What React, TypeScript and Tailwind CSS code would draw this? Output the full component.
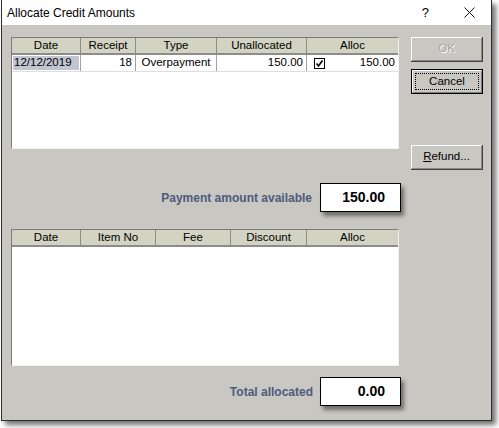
import React from "react";

const FONT = "font-['Liberation_Sans',Arial,sans-serif]";

type GridProps = {
  cols: string;
  headers: string[];
  height: string;
  children?: React.ReactNode;
};

function Grid({ cols, headers, height, children }: GridProps) {
  return (
    <div
      className={`w-[388px] ${height} border-l border-t border-[#7c7c7c] border-r border-b border-r-[#f2f2f2] border-b-[#f2f2f2] bg-white`}
    >
      <div className={`grid ${cols} h-[17px] border-b-2 border-[#8c8c8c] bg-[#d3d3c3]`}>
        {headers.map((h, i) => (
          <div
            key={h + i}
            className={`flex items-center justify-center text-[11.5px] leading-none text-black ${
              i < headers.length - 1 ? "border-r border-[#8c8c8c]" : ""
            }`}
          >
            {h}
          </div>
        ))}
      </div>
      {children}
    </div>
  );
}

function ValueBox({ value }: { value: string }) {
  return (
    <div className="flex h-[29px] w-[81px] items-center justify-end border border-black bg-white pr-[15px] text-[14px] font-bold text-black shadow-[3px_4px_4px_rgba(0,0,0,0.45)]">
      {value}
    </div>
  );
}

function Button({
  children,
  disabled,
  isDefault,
  className = "",
}: {
  children: React.ReactNode;
  disabled?: boolean;
  isDefault?: boolean;
  className?: string;
}) {
  if (isDefault) {
    return (
      <div className={`h-[25px] w-[72px] border border-black ${className}`}>
        <div className="h-full w-full border-t border-l border-white border-r border-b border-r-[#808080] border-b-[#808080] bg-[#c9c7c2] p-[2px]">
          <div className="flex h-full w-full items-center justify-center border border-dotted border-black text-[11.5px] text-black">
            {children}
          </div>
        </div>
      </div>
    );
  }
  return (
    <div
      className={`h-[25px] w-[72px] border-r border-b border-[#404040] ${className}`}
    >
      <div
        className={`flex h-full w-full items-center justify-center border-t border-l border-white border-r border-b border-r-[#8a8a8a] border-b-[#8a8a8a] bg-[#c9c7c2] text-[11.5px] ${
          disabled
            ? "text-[#a8a6a2] [text-shadow:1px_1px_0_#ffffff]"
            : "text-black"
        }`}
      >
        {children}
      </div>
    </div>
  );
}

export default function App() {
  return (
    <div className={`h-[428px] w-[499px] bg-white ${FONT}`}>
      <div className="ml-[1px] flex h-[421px] w-[491px] flex-col border-l border-r border-b border-[#2e2e2e] shadow-[4px_4px_5px_rgba(0,0,0,0.55)]">
        {/* title bar */}
        <div className="flex h-[25px] items-center bg-white pl-[5px] pr-[16px]">
          <span className="text-[12px] text-black">Allocate Credit Amounts</span>
          <span className="ml-auto text-[13px] text-black">?</span>
          <svg className="ml-[35px]" width="11" height="11" viewBox="0 0 11 11">
            <path d="M0.5 0.5 L10.5 10.5 M10.5 0.5 L0.5 10.5" stroke="#111" strokeWidth="1" />
          </svg>
        </div>

        {/* client */}
        <div className="flex flex-1 bg-[#c9c7c2] pl-[9px] pt-[12px]">
          <div className="flex w-[390px] flex-col">
            <Grid
              cols="grid-cols-[69px_55px_81px_90px_1fr]"
              headers={["Date", "Receipt", "Type", "Unallocated", "Alloc"]}
              height="h-[112px]"
            >
              <div className="grid h-[17px] grid-cols-[69px_55px_81px_90px_1fr] border-b border-[#dedede] text-[11.5px] leading-none text-black">
                <div className="flex items-center border-r border-[#a0a0a0] p-[1px]">
                  <span className="flex h-full w-full items-center bg-[#c2c6d2] pl-[1px]">12/12/2019</span>
                </div>
                <div className="flex items-center justify-end border-r border-[#a0a0a0] pr-[3px]">18</div>
                <div className="flex items-center justify-center border-r border-[#a0a0a0]">Overpayment</div>
                <div className="flex items-center justify-end border-r border-[#a0a0a0] pr-[3px]">150.00</div>
                <div className="flex items-center pl-[7px] pr-[3px]">
                  <svg width="11" height="11" viewBox="0 0 11 11">
                    <rect x="0.5" y="0.5" width="10" height="10" fill="white" stroke="black" />
                    <path d="M2.5 5.5 L4.5 8 L8.5 2.5" fill="none" stroke="black" strokeWidth="1.6" />
                  </svg>
                  <span className="ml-auto">150.00</span>
                </div>
              </div>
            </Grid>

            <div className="mt-[34px] flex items-center justify-end">
              <span className="mr-[8px] text-[12px] font-bold text-[#4d5b7c]">
                Payment amount available
              </span>
              <ValueBox value="150.00" />
            </div>

            <div className="mt-[17px]">
              <Grid
                cols="grid-cols-[69px_75px_75px_76px_1fr]"
                headers={["Date", "Item No", "Fee", "Discount", "Alloc"]}
                height="h-[137px]"
              />
            </div>

            <div className="mt-[11px] flex items-center justify-end">
              <span className="mr-[7px] text-[12px] font-bold text-[#4d5b7c]">
                Total allocated
              </span>
              <ValueBox value="0.00" />
            </div>
          </div>

          <div className="ml-[10px] flex flex-col">
            <Button disabled className="h-[24px]">OK</Button>
            <Button isDefault className="mt-[7px]">Cancel</Button>
            <Button className="mt-[51px]">
              <span>
                <span className="underline">R</span>efund...
              </span>
            </Button>
          </div>
        </div>
      </div>
    </div>
  );
}
